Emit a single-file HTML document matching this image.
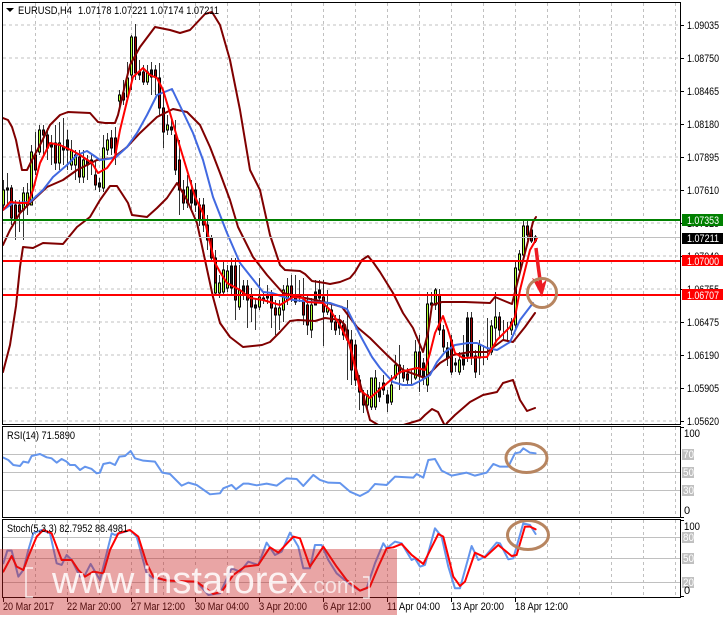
<!DOCTYPE html>
<html><head><meta charset="utf-8"><style>
html,body{margin:0;padding:0;background:#fff;width:723px;height:618px;overflow:hidden}
svg{display:block}
text{font-family:"Liberation Sans",sans-serif;font-size:11px;fill:#000}
.g line,.g path{stroke:#c0c0c0;stroke-width:1;stroke-dasharray:3 3;fill:none}
.c rect{width:2px;stroke:#000;stroke-width:1}
polyline{fill:none;stroke-linejoin:round;stroke-linecap:round;vector-effect:non-scaling-stroke}
.b{stroke:#800000;stroke-width:2}
.m{stroke:#4169e1;stroke-width:2}
.r{stroke:#f00;stroke-width:2}
.l{stroke:#6495ed;stroke-width:2}
.ls{fill:#fff}
</style></head><body>
<svg width="723" height="618" viewBox="0 0 723 618" xmlns="http://www.w3.org/2000/svg">
<defs><clipPath id="mc"><rect x="3" y="3" width="677" height="421"/></clipPath></defs>
<rect width="723" height="618" fill="#fff"/>

<g class="g">
<path d="M3 25H680M3 58H680M3 91H680M3 124H680M3 157H680M3 190H680M3 223H680M3 256H680M3 289H680M3 322H680M3 355H680M3 388H680M3 421H680"/>
<path d="M35.500 3V424M67.500 3V424M99.500 3V424M131.500 3V424M163.500 3V424M195.500 3V424M227.500 3V424M259.500 3V424M291.500 3V424M323.500 3V424M355.500 3V424M387.500 3V424M419.500 3V424M451.500 3V424M483.500 3V424M515.500 3V424M547.500 3V424M579.500 3V424M611.500 3V424M643.500 3V424M675.500 3V424"/>
<path d="M35.500 427V517M67.500 427V517M99.500 427V517M131.500 427V517M163.500 427V517M195.500 427V517M227.500 427V517M259.500 427V517M291.500 427V517M323.500 427V517M355.500 427V517M387.500 427V517M419.500 427V517M451.500 427V517M483.500 427V517M515.500 427V517M547.500 427V517M579.500 427V517M611.500 427V517M643.500 427V517M675.500 427V517"/>
<path d="M35.500 520V597M67.500 520V597M99.500 520V597M131.500 520V597M163.500 520V597M195.500 520V597M227.500 520V597M259.500 520V597M291.500 520V597M323.500 520V597M355.500 520V597M387.500 520V597M419.500 520V597M451.500 520V597M483.500 520V597M515.500 520V597M547.500 520V597M579.500 520V597M611.500 520V597M643.500 520V597M675.500 520V597"/>
</g>

<!-- indicator levels -->
<path d="M3 454.500H680M3 472.500H680M3 490.500H680M3 537.500H680M3 558.500H680M3 582.500H680" stroke="#c0c0c0" fill="none"/>

<g clip-path="url(#mc)">
<path stroke="#000" stroke-opacity=".8" fill="none" d="M3.500 180V210M7.500 173V205M11.500 185V225M15.500 200V240M19.500 200V232M23.500 187V240M27.500 183V215M31.500 145V205M35.500 132V175M39.500 125V155M43.500 125V155M47.500 128V160M51.500 135V165M55.500 125V170M59.500 122V170M63.500 118V165M67.500 130V170M71.500 140V170M75.500 150V180M79.500 150V183M83.500 150V183M87.500 155V180M91.500 155V175M95.500 160V190M99.500 178V192M103.500 135V192M107.500 133V155M111.500 130V155M115.500 127V165M119.500 90V110M123.500 80V105M127.500 62V100M131.500 35V90M135.500 24V80M139.500 60V80M143.500 65V85M147.500 65V85M151.500 62V95M155.500 65V95M159.500 63V115M163.500 90V148M167.500 115V135M171.500 120V135M175.500 120V175M179.500 140V215M183.500 180V210M187.500 175V208M191.500 180V212M195.500 183V212M199.500 198V226M203.500 198V232M207.500 215V250M211.500 235V262M215.500 250V295M219.500 275V298M223.500 262V295M227.500 265V292M231.500 258V295M235.500 258V320M239.500 265V310M243.500 280V300M247.500 280V328M251.500 288V322M255.500 298V330M259.500 278V310M263.500 292V304M267.500 285V304M271.500 290V328M275.500 300V335M279.500 300V330M283.500 285V322M287.500 278V305M291.500 275V302M295.500 275V305M299.500 280V302M303.500 278V325M307.500 295V335M311.500 298V338M315.500 280V305M319.500 280V302M323.500 280V346M327.500 290V315M331.500 305V330M335.500 315V335M339.500 315V335M343.500 320V340M347.500 300V380M351.500 330V385M355.500 340V386M359.500 375V410M363.500 390V413M367.500 390V410M371.500 378V410M375.500 370V410M379.500 382V402M383.500 375V395M387.500 390V412M391.500 375V405M395.500 355V380M399.500 345V390M403.500 365V382M407.500 368V385M411.500 370V385M415.500 340V380M419.500 335V392M423.500 358V385M427.500 292V392M431.500 292V310M435.500 288V310M439.500 289V335M443.500 325V352M447.500 342V366M451.500 335V375M455.500 358V372M459.500 352V375M463.500 335V370M467.500 312V362M471.500 312V365M475.500 350V378M479.500 340V375M483.500 345V365M487.500 318V360M491.500 320V355M495.500 292V345M499.500 312V338M503.500 320V340M507.500 322V340M511.500 318V335M515.500 262V328M519.500 250V272M523.500 221V258M527.500 221V240M531.500 226V243M535.500 235V243"/>
<g class="c" fill="#adff2f">
<rect x="2.500" y="190" height="15"/><rect x="22.500" y="193" height="17"/><rect x="26.500" y="193" height="12"/><rect x="30.500" y="152" height="53"/><rect x="38.500" y="130" height="22"/><rect x="58.500" y="143" height="20"/><rect x="70.500" y="150" height="15"/><rect x="74.500" y="155" height="10"/><rect x="82.500" y="160" height="17"/><rect x="102.500" y="148" height="40"/><rect x="106.500" y="140" height="10"/><rect x="118.500" y="95" height="6"/><rect x="126.500" y="78" height="19"/><rect x="130.500" y="37" height="38"/><rect x="146.500" y="72" height="10"/><rect x="166.500" y="125" height="5"/><rect x="186.500" y="187" height="16"/><rect x="214.500" y="283" height="10"/><rect x="218.500" y="283" height="10"/><rect x="222.500" y="270" height="22"/><rect x="226.500" y="271" height="17"/><rect x="238.500" y="290" height="17"/><rect x="258.500" y="297" height="10"/><rect x="278.500" y="308" height="7"/><rect x="282.500" y="290" height="20"/><rect x="286.500" y="286" height="14"/><rect x="310.500" y="305" height="25"/><rect x="326.500" y="308" height="4"/><rect x="366.500" y="395" height="10"/><rect x="370.500" y="378" height="29"/><rect x="374.500" y="378" height="29"/><rect x="390.500" y="385" height="17"/><rect x="394.500" y="365" height="13"/><rect x="414.500" y="352" height="26"/><rect x="426.500" y="304" height="81"/><rect x="434.500" y="290" height="15"/><rect x="458.500" y="360" height="12"/><rect x="478.500" y="345" height="13"/><rect x="490.500" y="326" height="26"/><rect x="494.500" y="317" height="11"/><rect x="510.500" y="322" height="8"/><rect x="514.500" y="268" height="57"/><rect x="518.500" y="254" height="16"/><rect x="522.500" y="226" height="29"/>
</g>
<g class="c" fill="#a00000">
<rect x="10.500" y="188" height="30"/><rect x="14.500" y="205" height="15"/><rect x="18.500" y="205" height="7"/><rect x="34.500" y="155" height="15"/><rect x="42.500" y="130" height="5"/><rect x="46.500" y="135" height="13"/><rect x="54.500" y="143" height="20"/><rect x="78.500" y="157" height="20"/><rect x="94.500" y="175" height="10"/><rect x="110.500" y="138" height="10"/><rect x="114.500" y="138" height="15"/><rect x="122.500" y="93" height="7"/><rect x="134.500" y="37" height="36"/><rect x="142.500" y="72" height="10"/><rect x="154.500" y="70" height="7"/><rect x="158.500" y="78" height="30"/><rect x="162.500" y="108" height="24"/><rect x="174.500" y="135" height="35"/><rect x="178.500" y="160" height="30"/><rect x="182.500" y="190" height="13"/><rect x="198.500" y="205" height="15"/><rect x="202.500" y="205" height="20"/><rect x="206.500" y="225" height="15"/><rect x="210.500" y="238" height="20"/><rect x="214.500" y="258" height="25"/><rect x="234.500" y="266" height="34"/><rect x="246.500" y="286" height="14"/><rect x="250.500" y="295" height="12"/><rect x="270.500" y="295" height="13"/><rect x="274.500" y="308" height="7"/><rect x="290.500" y="286" height="12"/><rect x="302.500" y="300" height="15"/><rect x="306.500" y="305" height="20"/><rect x="322.500" y="297" height="15"/><rect x="330.500" y="310" height="12"/><rect x="334.500" y="322" height="8"/><rect x="342.500" y="325" height="10"/><rect x="350.500" y="340" height="30"/><rect x="354.500" y="345" height="35"/><rect x="358.500" y="380" height="12"/><rect x="362.500" y="395" height="10"/><rect x="382.500" y="383" height="7"/><rect x="398.500" y="365" height="8"/><rect x="402.500" y="370" height="8"/><rect x="406.500" y="374" height="6"/><rect x="418.500" y="352" height="23"/><rect x="438.500" y="295" height="35"/><rect x="442.500" y="330" height="17"/><rect x="450.500" y="340" height="32"/><rect x="470.500" y="318" height="40"/><rect x="474.500" y="356" height="16"/><rect x="498.500" y="317" height="13"/><rect x="526.500" y="226" height="9"/><rect x="530.500" y="230" height="11"/>
</g>
<g class="c" fill="#1a1a1a">
<rect x="6.500" y="188" height="2"/><rect x="50.500" y="145" height="2"/><rect x="62.500" y="147" height="3"/><rect x="66.500" y="140" height="10"/><rect x="86.500" y="160" height="5"/><rect x="90.500" y="160" height="3"/><rect x="98.500" y="183" height="4"/><rect x="138.500" y="72" height="3"/><rect x="150.500" y="70" height="7"/><rect x="170.500" y="127" height="3"/><rect x="190.500" y="190" height="13"/><rect x="194.500" y="190" height="15"/><rect x="230.500" y="266" height="22"/><rect x="242.500" y="286" height="9"/><rect x="254.500" y="305" height="3"/><rect x="262.500" y="298" height="2"/><rect x="266.500" y="295" height="3"/><rect x="294.500" y="295" height="7"/><rect x="298.500" y="295" height="3"/><rect x="314.500" y="292" height="13"/><rect x="318.500" y="290" height="8"/><rect x="338.500" y="322" height="6"/><rect x="346.500" y="330" height="10"/><rect x="378.500" y="388" height="9"/><rect x="386.500" y="395" height="8"/><rect x="422.500" y="363" height="15"/><rect x="430.500" y="303" height="2"/><rect x="446.500" y="348" height="10"/><rect x="454.500" y="363" height="2"/><rect x="462.500" y="355" height="10"/><rect x="466.500" y="318" height="38"/><rect x="534.500" y="237" height="4"/>
</g>

<polyline class="b" points="3,118 8,120 12,127 16,140 22,170 27,170 32,160 40,145 50,125 60,115 68,112 90,113 98,122 105,123 115,123 118,115 125,85 130,65 140,47 155,27 170,30 180,33 190,30 205,14 212,12 220,25 230,60 240,110 250,170 260,190 270,235 280,265 285,270 300,271 305,274 312,281 325,283 330,284 340,282 350,278 355,272 362,260 368,256 373,262 380,272 393,293 403,313 413,328 423,352 428,333 432,305 442,302 465,302 490,303 495,297 507,302 512,304 518,280 527,245 533,222 536,217"/>
<polyline class="b" points="3,245 10,230 20,213 30,203 47,187 63,180 77,170 97,160 113,158 127,147 140,133 157,117 173,109 187,112 200,125 210,147 220,173 230,200 238,227 253,257 267,275 283,293 300,297 320,301 335,305 342,307 357,327 370,338 387,355 403,370 425,378 440,363 453,355 470,352 487,352 503,340 513,342 525,327 535,313"/>
<polyline class="b" points="3,372 10,345 16,306 20,267 23,247 33,248 43,243 63,244 77,227 90,217 100,200 110,186 117,186 128,203 132,215 147,217 157,208 167,198 177,183 187,200 197,223 205,260 213,297 220,323 230,337 243,347 262,345 270,342 280,332 290,321 298,320 315,321 325,318 340,320 345,325 350,347 360,383 370,420 380,426"/>
<polyline class="b" points="400,426 420,420 425,415 432,409 438,412 445,426 447,423 455,415 470,402 483,395 497,392 503,383 513,380 520,400 527,411 535,408"/>
<polyline class="m" points="3,210 13,203 30,202 43,190 53,177 67,165 77,155 87,151 93,155 100,160 115,158 127,147 137,133 147,115 157,95 172,89 183,112 193,133 203,160 213,197 227,233 240,263 263,292 272,293 293,300 313,302 330,303 347,309 360,335 372,357 380,368 393,382 403,385 412,385 422,380 430,375 437,362 445,352 455,345 468,343 477,343 487,348 497,350 510,342 520,320 533,303"/>
<polyline class="r" points="3,210 10,202 20,203 28,203 33,190 40,163 50,143 60,145 73,151 80,155 92,163 98,173 107,168 115,157 120,130 128,97 133,77 143,68 150,75 157,78 163,90 170,113 177,137 187,170 195,197 203,213 210,243 215,263 220,272 227,283 240,290 250,298 263,300 280,305 293,297 303,298 307,302 323,303 330,310 340,325 350,345 360,390 370,398 385,385 400,372 417,368 425,370 430,353 435,333 443,316 448,330 455,353 463,358 487,357 497,340 510,327 515,317 520,290 530,250 537,238"/>
</g>

<!-- horizontal levels -->
<path d="M3 237.500H680" stroke="#c0c0c0" stroke-width="1" fill="none"/>
<path d="M3 220H680" stroke="#008000" stroke-width="2" fill="none"/>
<path d="M3 261H680M3 295H680" stroke="#f00" stroke-width="2" fill="none"/>

<!-- arrow and circles -->
<path d="M536 248L538 265L541 287" stroke="#ed1c24" stroke-width="3.500" fill="none"/>
<path d="M532 278L538 281L541 285L547 279L542 297Z" fill="#ed1c24"/>
<circle cx="542" cy="293" r="14.500" fill="none" stroke="#b78560" stroke-width="3"/>

<!-- RSI -->
<polyline class="l" transform="translate(0 310) scale(.3333)" points="10,443 25,450 40,465 60,468 70,455 85,458 95,438 120,432 140,442 155,445 170,458 185,447 200,455 210,465 225,465 240,480 255,470 275,477 290,490 300,488 310,462 330,458 345,465 358,440 375,438 392,423 405,445 430,452 465,455 487,488 510,492 545,527 565,518 590,525 630,553 660,550 670,535 695,525 708,538 730,521 745,521 770,526 800,521 830,527 860,505 890,507 910,528 940,495 960,510 985,518 1020,519 1050,545 1080,558 1105,545 1125,522 1160,525 1185,500 1240,503 1250,492 1270,503 1285,450 1305,447 1325,482 1355,497 1400,488 1425,497 1460,488 1480,462 1500,470 1525,470 1545,430 1560,427 1570,415 1590,428 1607,430"/>
<ellipse cx="526.500" cy="458" rx="20.500" ry="14.500" fill="none" stroke="#b78560" stroke-width="3"/>

<!-- Stoch -->
<polyline class="l" transform="translate(0 310) scale(.3333)" points="10,760 22,722 35,722 55,800 70,780 85,720 100,670 125,660 150,670 170,760 185,765 200,735 215,750 240,800 255,795 272,762 300,810 320,730 335,670 345,675 390,660 410,680 440,790 460,805 500,810 550,815 590,815 625,855 660,850 695,775 720,785 745,755 775,765 800,698 825,735 845,725 870,668 895,710 910,775 930,775 945,705 965,705 985,750 1010,790 1040,815 1060,830 1080,842 1100,835 1125,760 1150,700 1160,715 1185,695 1205,700 1235,750 1245,745 1260,770 1275,765 1305,655 1325,680 1345,770 1365,835 1380,835 1415,708 1435,750 1455,740 1490,698 1500,700 1525,748 1540,745 1570,640 1590,645 1607,672"/>
<polyline class="r" transform="translate(0 310) scale(.3333)" points="10,785 35,738 50,770 70,780 85,740 110,680 130,660 155,670 185,750 215,750 235,780 255,800 280,785 310,790 330,720 355,670 390,660 415,680 440,760 460,800 500,812 590,815 640,852 665,845 700,795 735,770 775,765 810,712 835,728 880,680 900,685 930,770 970,710 1010,770 1040,810 1080,842 1110,830 1135,770 1160,715 1180,712 1205,702 1235,735 1270,762 1315,672 1330,680 1360,800 1380,828 1395,815 1425,728 1455,742 1495,705 1535,738 1550,735 1575,650 1590,650 1607,658"/>
<ellipse cx="528" cy="535" rx="20.500" ry="14.500" fill="none" stroke="#b78560" stroke-width="3"/>

<!-- frames -->
<rect x="2.500" y="2.500" width="678" height="422" fill="none" stroke="#000"/>
<rect x="2.500" y="426.500" width="678" height="91" fill="none" stroke="#000"/>
<rect x="2.500" y="519.500" width="678" height="78" fill="none" stroke="#000"/>
<rect x="2" y="424" width="679" height="1" fill="#000"/>
<path d="M681 25.500h3M681 58.500h3M681 91.500h3M681 124.500h3M681 157.500h3M681 190.500h3M681 223.500h3M681 256.500h3M681 289.500h3M681 322.500h3M681 355.500h3M681 388.500h3M681 421.500h3M681 427.500h3M681 517.500h3M681 520.500h3M681 596.500h3M3.500 598v4M67.500 598v4M131.500 598v4M195.500 598v4M259.500 598v4M323.500 598v4M387.500 598v4M451.500 598v4M515.500 598v4" stroke="#000" fill="none"/>

<!-- top labels -->
<path d="M6 8h8l-4 4z" fill="#000"/>
<text x="18" y="14" textLength="54" lengthAdjust="spacingAndGlyphs">EURUSD,H4</text>
<text x="78" y="14" textLength="141" lengthAdjust="spacingAndGlyphs">1.07178 1.07221 1.07174 1.07211</text>
<text x="7" y="439" textLength="68" lengthAdjust="spacingAndGlyphs">RSI(14) 71.5890</text>
<text x="7" y="532" textLength="121" lengthAdjust="spacingAndGlyphs">Stoch(5,3,3) 82.7952 88.4981</text>

<!-- price axis -->
<g>
<text x="687" y="29" textLength="32" lengthAdjust="spacingAndGlyphs">1.09035</text>
<text x="687" y="62" textLength="32" lengthAdjust="spacingAndGlyphs">1.08750</text>
<text x="687" y="95" textLength="32" lengthAdjust="spacingAndGlyphs">1.08465</text>
<text x="687" y="128" textLength="32" lengthAdjust="spacingAndGlyphs">1.08180</text>
<text x="687" y="161" textLength="32" lengthAdjust="spacingAndGlyphs">1.07895</text>
<text x="687" y="194" textLength="32" lengthAdjust="spacingAndGlyphs">1.07610</text>
<text x="687" y="227" textLength="32" lengthAdjust="spacingAndGlyphs">1.07325</text>
<text x="687" y="260" textLength="32" lengthAdjust="spacingAndGlyphs">1.07040</text>
<text x="687" y="293" textLength="32" lengthAdjust="spacingAndGlyphs">1.06755</text>
<text x="687" y="326" textLength="32" lengthAdjust="spacingAndGlyphs">1.06475</text>
<text x="687" y="359" textLength="32" lengthAdjust="spacingAndGlyphs">1.06190</text>
<text x="687" y="392" textLength="32" lengthAdjust="spacingAndGlyphs">1.05905</text>
<text x="687" y="425" textLength="32" lengthAdjust="spacingAndGlyphs">1.05620</text>
</g>
<rect x="682" y="214" width="41" height="12" fill="#008000"/>
<text class="ls" x="687" y="224" textLength="32" lengthAdjust="spacingAndGlyphs">1.07353</text>
<rect x="682" y="233" width="41" height="11" fill="#000"/>
<text class="ls" x="687" y="242" textLength="32" lengthAdjust="spacingAndGlyphs">1.07211</text>
<rect x="682" y="255" width="41" height="11" fill="#f00"/>
<text class="ls" x="687" y="265" textLength="32" lengthAdjust="spacingAndGlyphs">1.07000</text>
<rect x="682" y="289" width="41" height="11" fill="#f00"/>
<text class="ls" x="687" y="299" textLength="32" lengthAdjust="spacingAndGlyphs">1.06707</text>

<!-- indicator axis -->
<text x="684" y="437" textLength="16" lengthAdjust="spacingAndGlyphs">100</text>
<rect x="682" y="449" width="12" height="11" fill="#c0c0c0"/><text class="ls" x="683" y="458" textLength="11" lengthAdjust="spacingAndGlyphs">70</text>
<rect x="682" y="467" width="12" height="11" fill="#c0c0c0"/><text class="ls" x="683" y="476" textLength="11" lengthAdjust="spacingAndGlyphs">50</text>
<rect x="682" y="485" width="12" height="11" fill="#c0c0c0"/><text class="ls" x="683" y="494" textLength="11" lengthAdjust="spacingAndGlyphs">30</text>
<text x="684" y="514">0</text>
<text x="684" y="530" textLength="16" lengthAdjust="spacingAndGlyphs">100</text>
<rect x="682" y="532" width="12" height="11" fill="#c0c0c0"/><text class="ls" x="683" y="541" textLength="11" lengthAdjust="spacingAndGlyphs">80</text>
<rect x="682" y="553" width="12" height="11" fill="#c0c0c0"/><text class="ls" x="683" y="562" textLength="11" lengthAdjust="spacingAndGlyphs">50</text>
<rect x="682" y="577" width="12" height="11" fill="#c0c0c0"/><text class="ls" x="683" y="586" textLength="11" lengthAdjust="spacingAndGlyphs">20</text>
<text x="684" y="594">0</text>

<!-- time axis -->
<text x="3" y="610" textLength="51" lengthAdjust="spacingAndGlyphs">20 Mar 2017</text>
<text x="67" y="610" textLength="54" lengthAdjust="spacingAndGlyphs">22 Mar 20:00</text>
<text x="131" y="610" textLength="54" lengthAdjust="spacingAndGlyphs">27 Mar 12:00</text>
<text x="195" y="610" textLength="54" lengthAdjust="spacingAndGlyphs">30 Mar 04:00</text>
<text x="259" y="610" textLength="48" lengthAdjust="spacingAndGlyphs">3 Apr 20:00</text>
<text x="323" y="610" textLength="48" lengthAdjust="spacingAndGlyphs">6 Apr 12:00</text>
<text x="387" y="610" textLength="53" lengthAdjust="spacingAndGlyphs">11 Apr 04:00</text>
<text x="451" y="610" textLength="53" lengthAdjust="spacingAndGlyphs">13 Apr 20:00</text>
<text x="515" y="610" textLength="53" lengthAdjust="spacingAndGlyphs">18 Apr 12:00</text>

<!-- watermark -->
<rect x="0" y="549" width="397" height="66" fill="rgb(200,30,30)" fill-opacity=".4"/>
<text x="52" y="593" style="font-size:38px;fill:#fff;fill-opacity:.85">www.instaforex<tspan style="font-size:22px;fill-opacity:.7">.com</tspan></text>
<path d="M33 568H26V597H33M363 577H369V598H363" fill="none" stroke="#fff" stroke-opacity=".8" stroke-width="1.500"/>
</svg>
</body></html>
